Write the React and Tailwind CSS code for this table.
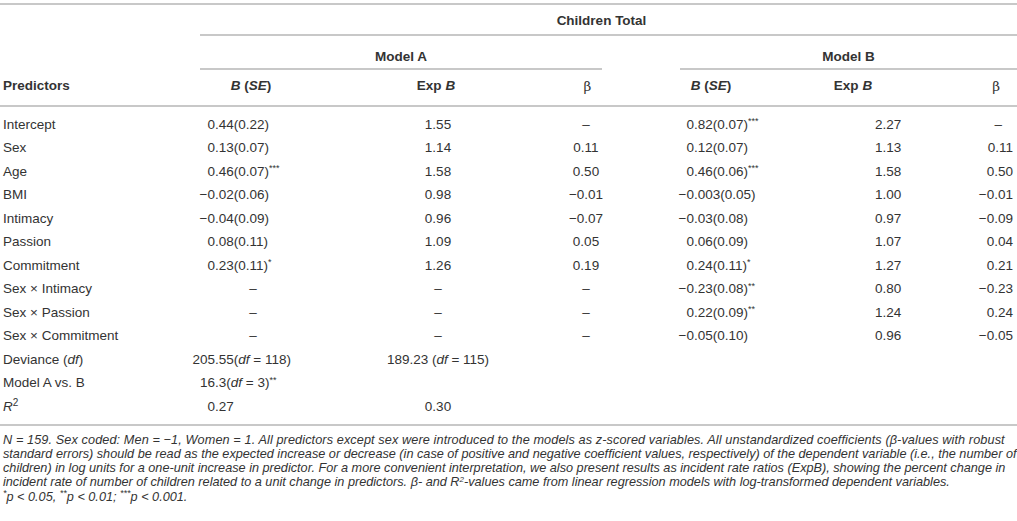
const DASH = "–";

const rows = [
  ["Intercept", ["0", ".44(0.22)"], "1.55", DASH, ["0", ".82(0.07)", "***"], "2.27", DASH],
  ["Sex", ["0", ".13(0.07)"], "1.14", "0.11", ["0", ".12(0.07)"], "1.13", "0.11"],
  ["Age", ["0", ".46(0.07)", "***"], "1.58", "0.50", ["0", ".46(0.06)", "***"], "1.58", "0.50"],
  ["BMI", ["−0", ".02(0.06)"], "0.98", "−0.01", ["−0", ".003(0.05)"], "1.00", "−0.01"],
  ["Intimacy", ["−0", ".04(0.09)"], "0.96", "−0.07", ["−0", ".03(0.08)"], "0.97", "−0.09"],
  ["Passion", ["0", ".08(0.11)"], "1.09", "0.05", ["0", ".06(0.09)"], "1.07", "0.04"],
  ["Commitment", ["0", ".23(0.11)", "*"], "1.26", "0.19", ["0", ".24(0.11)", "*"], "1.27", "0.21"],
  ["Sex × Intimacy", DASH, DASH, DASH, ["−0", ".23(0.08)", "**"], "0.80", "−0.23"],
  ["Sex × Passion", DASH, DASH, DASH, ["0", ".22(0.09)", "**"], "1.24", "0.24"],
  ["Sex × Commitment", DASH, DASH, DASH, ["−0", ".05(0.10)"], "0.96", "−0.05"],
];

function Stars({ n }) {
  return <sup className="text-[9px] leading-none -top-[0.5em]">{n}</sup>;
}

// decimal aligned value: integer part pushed against a fixed edge
function Dec({ int, rest, stars }) {
  return (
    <span className="inline-flex whitespace-nowrap">
      <span className="inline-flex justify-end w-[15px]">{int}</span>
      <span>
        {rest}
        {stars && <Stars n={stars} />}
      </span>
    </span>
  );
}

function BCell({ v, pad }) {
  if (v === DASH) {
    return <div className={`text-center ${pad === "a" ? "pr-[34px]" : "pr-[10px]"}`}>{DASH}</div>;
  }
  return (
    <div className={pad === "a" ? "" : "pl-[43px]"}>
      <Dec int={v[0]} rest={v[1]} stars={v[2]} />
    </div>
  );
}

function Row({ children }) {
  return <div className="grid grid-cols-[200px_140px_196px_100px_150px_126px_105px] h-[23.5px] items-center">{children}</div>;
}

export default function App() {
  return (
    <div className="w-[1017px] h-[521px] bg-white text-[#333] text-[13.5px] leading-[16px] overflow-hidden" style={{ fontFamily: '"Liberation Sans", Arial, sans-serif' }}>
      <div className="pt-[3px]">
        <div className="h-[2px] bg-[#c8c8c8]" />
        {/* Children Total */}
        <div className="h-[29px] flex">
          <div className="w-[200px]" />
          <div className="flex-1 text-center font-bold pt-[8px] pr-[14px]">Children Total</div>
        </div>
        <div className="flex">
          <div className="w-[200px]" />
          <div className="flex-1 h-[2px] bg-[#c8c8c8]" />
        </div>
        {/* Model row */}
        <div className="h-[32px] flex font-bold">
          <div className="w-[200px]" />
          <div className="w-[402px] text-center pt-[13px]">Model A</div>
          <div className="w-[78px]" />
          <div className="flex-1 text-center pt-[13px]">Model B</div>
        </div>
        <div className="flex">
          <div className="w-[200px]" />
          <div className="w-[402px] h-[2px] bg-[#c8c8c8]" />
          <div className="w-[78px]" />
          <div className="flex-1 h-[2px] bg-[#c8c8c8]" />
        </div>
        {/* column headers */}
        <div className="grid grid-cols-[200px_140px_196px_100px_150px_126px_105px] h-[35px] pt-[8px] font-bold">
          <div className="pl-[3px]">Predictors</div>
          <div className="text-center pr-[38px]"><i>B</i> (<i>SE</i>)</div>
          <div className="text-center pr-[4px]">Exp <i>B</i></div>
          <div className="text-center pl-[3px] font-normal" style={{ fontFamily: '"DejaVu Serif", serif' }}>β</div>
          <div className="text-center"><i>B</i> (<i>SE</i>)</div>
          <div className="text-center pl-[8px]">Exp <i>B</i></div>
          <div className="text-right pr-[17px] font-normal" style={{ fontFamily: '"DejaVu Serif", serif' }}>β</div>
        </div>
        <div className="h-[2px] bg-[#c8c8c8]" />
        {/* body */}
        <div className="pt-[6px] pb-[5px]">
          {rows.map((r) => (
            <Row key={r[0]}>
              <div className="pl-[3px] whitespace-nowrap">{r[0]}</div>
              <BCell v={r[1]} pad="a" />
              <div className="text-center">{r[2]}</div>
              <div className="text-center">{r[3]}</div>
              <BCell v={r[4]} pad="b" />
              <div className="pl-[89px]">{r[5]}</div>
              <div className={r[6] === DASH ? "text-right pr-[15px]" : "text-right pr-[4px]"}>{r[6]}</div>
            </Row>
          ))}
          <Row>
            <div className="pl-[3px]">Deviance (<i>df</i>)</div>
            <div><Dec int="205" rest={<>.55(<i>df</i> = 118)</>} /></div>
            <div className="text-center whitespace-nowrap">189.23 (<i>df</i> = 115)</div>
            <div /><div /><div /><div />
          </Row>
          <Row>
            <div className="pl-[3px]">Model A vs. B</div>
            <div><Dec int="16" rest={<>.3(<i>df</i> = 3)</>} stars="**" /></div>
            <div /><div /><div /><div /><div />
          </Row>
          <Row>
            <div className="pl-[3px]"><i>R</i><sup className="text-[10px] leading-none -top-[0.5em]">2</sup></div>
            <div><Dec int="0" rest=".27" /></div>
            <div className="text-center">0.30</div>
            <div /><div /><div /><div />
          </Row>
        </div>
        <div className="h-[2px] bg-[#c8c8c8]" />
        {/* footnote */}
        <div className="pt-[7px] pl-[3px] italic text-[12.7px] leading-[14.3px] whitespace-nowrap">
          <div className="tracking-[0.1px]">N = 159. Sex coded: Men = −1, Women = 1. All predictors except sex were introduced to the models as z-scored variables. All unstandardized coefficients (β-values with robust</div>
          <div>standard errors) should be read as the expected increase or decrease (in case of positive and negative coefficient values, respectively) of the dependent variable (i.e., the number of</div>
          <div>children) in log units for a one-unit increase in predictor. For a more convenient interpretation, we also present results as incident rate ratios (ExpB), showing the percent change in</div>
          <div>incident rate of number of children related to a unit change in predictors. β- and R<sup className="text-[8px] leading-none -top-[0.5em]">2</sup>-values came from linear regression models with log-transformed dependent variables.</div>
          <div>
            <Stars n="*" />p &lt; 0.05, <Stars n="**" />p &lt; 0.01; <Stars n="***" />p &lt; 0.001.
          </div>
        </div>
      </div>
    </div>
  );
}
